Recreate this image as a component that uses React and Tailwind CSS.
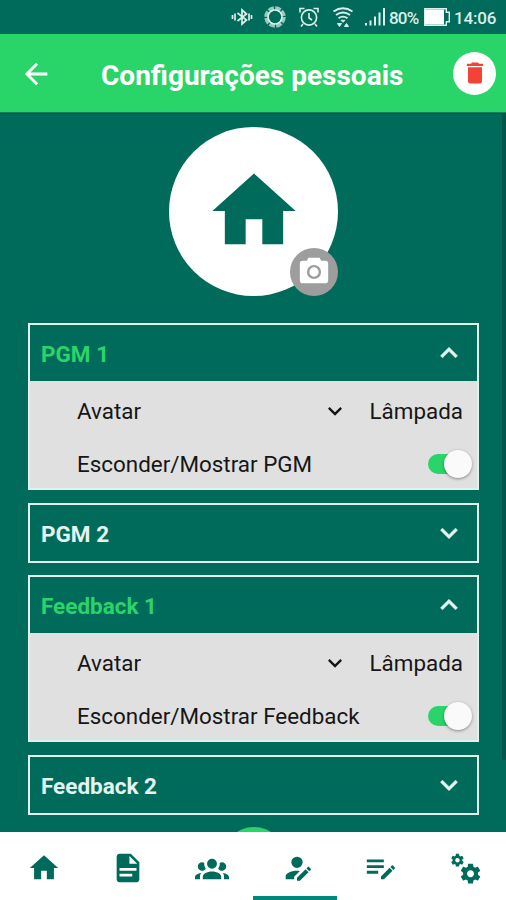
import React, { useState } from 'react';

const icons = {
    home: 'M10 20v-6h4v6h5v-8h3L12 3 2 12h3v8z',
    document: 'M13 9h5.5L13 3.5V9M6 2h8l6 6v12a2 2 0 0 1-2 2H6a2 2 0 0 1-2-2V4c0-1.11.89-2 2-2m9 16v-2H6v2h9m3-4v-2H6v2h12Z',
    group: 'M12,5.5A3.5,3.5 0 0,1 15.5,9A3.5,3.5 0 0,1 12,12.5A3.5,3.5 0 0,1 8.5,9A3.5,3.5 0 0,1 12,5.5M5,8C5.56,8 6.08,8.15 6.53,8.42C6.38,9.85 6.8,11.27 7.66,12.38C7.16,13.34 6.16,14 5,14A3,3 0 0,1 2,11A3,3 0 0,1 5,8M19,8A3,3 0 0,1 22,11A3,3 0 0,1 19,14C17.84,14 16.84,13.34 16.34,12.38C17.2,11.27 17.62,9.85 17.47,8.42C17.92,8.15 18.44,8 19,8M5.5,18.25C5.5,16.18 8.41,14.5 12,14.5C15.59,14.5 18.5,16.18 18.5,18.25V20H5.5V18.25M0,20V18.5C0,17.11 1.89,15.94 4.45,15.6C3.86,16.28 3.5,17.22 3.5,18.25V20H0M24,20H20.5V18.25C20.5,17.22 20.14,16.28 19.55,15.6C22.11,15.94 24,17.11 24,18.5V20Z',
    userEdit: 'M21.7,13.35L20.7,14.35L18.65,12.3L19.65,11.3C19.86,11.09 20.21,11.09 20.42,11.3L21.7,12.58C21.91,12.79 21.91,13.14 21.7,13.35M12,18.94L18.06,12.88L20.11,14.93L14.06,21H12V18.94M12,14C7.58,14 4,15.79 4,18V20H10V18.11L14,14.11C13.34,14.03 12.67,14 12,14M12,4A4,4 0 0,0 8,8A4,4 0 0,0 12,12A4,4 0 0,0 16,8A4,4 0 0,0 12,4Z',
    listEdit: 'M2,6V8H14V6H2M2,10V12H14V10H2M20.04,10.13C19.9,10.13 19.76,10.19 19.65,10.3L18.65,11.3L20.7,13.35L21.7,12.35C21.92,12.14 21.92,11.79 21.7,11.58L20.42,10.3C20.31,10.19 20.18,10.13 20.04,10.13M18.07,11.88L12,17.94V20H14.06L20.12,13.93L18.07,11.88M2,14V16H10V14H2Z',
    cogs: 'M15.9,18.45C17.25,18.45 18.35,17.35 18.35,16C18.35,14.65 17.25,13.55 15.9,13.55C14.54,13.55 13.45,14.65 13.45,16C13.45,17.35 14.54,18.45 15.9,18.45M21.1,16.68L22.58,17.84C22.71,17.95 22.75,18.13 22.66,18.29L21.26,20.71C21.17,20.86 21,20.92 20.83,20.86L19.09,20.16C18.73,20.44 18.33,20.67 17.91,20.85L17.64,22.7C17.62,22.87 17.47,23 17.3,23H14.5C14.32,23 14.18,22.87 14.15,22.7L13.89,20.85C13.46,20.67 13.07,20.44 12.71,20.16L10.96,20.86C10.81,20.92 10.62,20.86 10.54,20.71L9.14,18.29C9.05,18.13 9.09,17.95 9.22,17.84L10.7,16.68L10.65,16L10.7,15.31L9.22,14.16C9.09,14.05 9.05,13.86 9.14,13.71L10.54,11.29C10.62,11.13 10.81,11.07 10.96,11.13L12.71,11.84C13.07,11.56 13.46,11.32 13.89,11.15L14.15,9.29C14.18,9.13 14.32,9 14.5,9H17.3C17.47,9 17.62,9.13 17.64,9.29L17.91,11.15C18.33,11.32 18.73,11.56 19.09,11.84L20.83,11.13C21,11.07 21.17,11.13 21.26,11.29L22.66,13.71C22.75,13.86 22.71,14.05 22.58,14.16L21.1,15.31L21.15,16L21.1,16.68M6.69,8.07C7.56,8.07 8.26,7.37 8.26,6.5C8.26,5.63 7.56,4.92 6.69,4.92A1.58,1.58 0 0,0 5.11,6.5C5.11,7.37 5.82,8.07 6.69,8.07M10.03,6.94L11,7.68C11.07,7.75 11.09,7.87 11.03,7.97L10.13,9.53C10.08,9.63 9.96,9.67 9.86,9.63L8.74,9.18L8,9.62L7.81,10.81C7.79,10.92 7.7,11 7.59,11H5.79C5.67,11 5.58,10.92 5.56,10.81L5.4,9.62L4.64,9.18L3.5,9.63C3.41,9.67 3.3,9.63 3.24,9.53L2.34,7.97C2.28,7.87 2.31,7.75 2.39,7.68L3.34,6.94L3.31,6.5L3.34,6.06L2.39,5.32C2.31,5.25 2.28,5.13 2.34,5.03L3.24,3.47C3.3,3.37 3.41,3.33 3.5,3.38L4.63,3.82L5.4,3.38L5.56,2.19C5.58,2.08 5.67,2 5.79,2H7.59C7.7,2 7.79,2.08 7.81,2.19L8,3.38L8.74,3.82L9.86,3.38C9.96,3.33 10.08,3.37 10.13,3.47L11.03,5.03C11.09,5.13 11.07,5.25 11,5.32L10.03,6.06L10.06,6.5L10.03,6.94Z',
    camera: 'M4 4h3l1-2h8l1 2h3a2 2 0 0 1 2 2v12a2 2 0 0 1-2 2H4a2 2 0 0 1-2-2V6a2 2 0 0 1 2-2m8 3a5 5 0 1 0 0 10 5 5 0 0 0 0-10m0 1.7a3.3 3.3 0 1 1 0 6.6 3.3 3.3 0 0 1 0-6.6z',
    trash: 'M19 4h-3.5l-1-1h-5l-1 1H5v2h14M6 19a2 2 0 0 0 2 2h8a2 2 0 0 0 2-2V7H6v12Z',
    back: 'M20 11v2H8l5.5 5.5-1.42 1.42L4.16 12l7.92-7.92L13.5 5.5 8 11h12Z',
    up: 'M7.41 15.41 12 10.83l4.59 4.58L18 14l-6-6-6 6z',
    down: 'M7.41 8.58 12 13.17l4.59-4.59L18 10l-6 6-6-6z',
};

const Icon = ({ name, className }) => (
    <svg viewBox="0 0 24 24" fill="currentColor" className={`shrink-0 ${className}`}>
        <path d={icons[name]} />
    </svg>
);

const StatusBar = () => (
    <div className="h-[34px] shrink-0 flex items-center justify-end pr-[10px] text-[#dcefeb]">
        <svg viewBox="0 0 22 20" className="w-[22px] h-5" fill="none" stroke="currentColor" strokeWidth="1.7">
            <path d="M6.5 6 15.5 13l-4.500 4V3l4.500 4-9 7" />
            <path d="M4 6.500v7M1.500 8v4M18 6.500v7M20.500 8v4" />
        </svg>
        <svg viewBox="0 0 24 24" className="w-6 h-6 ml-[10px]" fill="none" stroke="currentColor">
            <circle cx="12" cy="12" r="8.5" strokeWidth="4.500" strokeDasharray="5.4 1.27" opacity=".7" />
            <circle cx="12" cy="12" r="7" strokeWidth="1.6" />
        </svg>
        <svg viewBox="0 0 22 22" className="w-[22px] h-[22px] ml-[11px]" fill="none" stroke="currentColor" strokeWidth="1.6">
            <circle cx="11" cy="11.5" r="7.6" />
            <path d="M11 7v5l3 2M5 18l-2 2.5M17 18l2 2.5M2 6.5V2.5h4.5M20 6.5V2.5h-4.5" />
        </svg>
        <svg viewBox="0 0 22 24" className="w-[22px] h-6 ml-[12px]" fill="none" stroke="currentColor" strokeWidth="1.9">
            <path d="M1.5 6.500q9.500-6.500 19 0M4 10q7-5 14 0M6.500 13.300q4.500-3.300 9 0" />
            <path d="M9 15.300h4l-2 2zM5.500 18.500h4l-2 3zM12.500 21.500h4l-2-3z" fill="currentColor" strokeWidth="1" />
        </svg>
        <svg viewBox="0 0 20 18" className="w-5 h-[18px] ml-[11px]" fill="currentColor">
            <path d="M0 15h2v2.500H0zM4.500 12.500h2v5h-2zM9 8.500h2v9H9zM13.500 4.500h2v13h-2zM18 0h2v17.500h-2z" />
        </svg>
        <span className="ml-1 mt-[2px] w-[33px] text-[17px] leading-5 tracking-[-0.8px] whitespace-nowrap font-medium">80%</span>
        <svg viewBox="0 0 26 18" className="w-[26px] h-[18px] ml-[2px]">
            <path d="M.8.800h21.500v3.500h3v9.500h-3v3.400H.800z" fill="none" stroke="currentColor" strokeWidth="1.400" />
            <path d="M.5 1.500h19.500v15H.500z" fill="#fff" />
        </svg>
        <span className="ml-[4px] mt-[2px] w-[42px] text-[17px] leading-5 tracking-[-0.2px] whitespace-nowrap font-medium">14:06</span>
    </div>
);

const Header = () => (
    <header className="h-[79px] shrink-0 flex items-center bg-[#29d568] border-b border-[#12805a] text-white">
        <button className="ml-[19px] mt-[2px]"><Icon name="back" className="w-[34px] h-[34px]" /></button>
        <h1 className="ml-[48px] mt-[5px] w-[320px] text-[28px] leading-8 font-bold whitespace-nowrap">Configurações pessoais</h1>
        <button className="ml-[32px] w-[43px] h-[43px] rounded-full bg-white text-[#f44336] flex items-center justify-center">
            <Icon name="trash" className="w-[28px] h-[28px]" />
        </button>
    </header>
);

const Avatar = () => (
    <div className="relative mx-auto mt-[13px] w-[169px] h-[169px] shrink-0 rounded-full bg-white text-[#016b5b] flex items-center justify-center">
        <Icon name="home" className="w-[100px] h-[100px] -mt-[2px]" />
        <button className="absolute right-0 bottom-0 w-[48px] h-[48px] rounded-full bg-[#9d9d9d] text-white flex items-center justify-center">
            <Icon name="camera" className="w-[34px] h-[34px]" />
        </button>
    </div>
);

const Toggle = ({ on, onClick }) => (
    <button onClick={onClick} className="relative w-[44px] h-[28px] flex items-center">
        <span className={`block w-[38px] h-[20px] rounded-full ${on ? 'bg-[#29d568]' : 'bg-[#9e9e9e]'}`} />
        <span className={`absolute top-0 w-[28px] h-[28px] rounded-full bg-[#fafafa] shadow-[0_1px_3px_rgba(0,0,0,0.4)] ${on ? 'right-0' : 'left-0'}`} />
    </button>
);

const Panel = ({ title, label, startOpen }) => {
    const [open, setOpen] = useState(startOpen);
    const [visible, setVisible] = useState(true);

    return (
        <section className="border-2 border-[#e3f0ec] shrink-0">
            <button
                onClick={() => setOpen(!open)}
                className={`w-full h-[56px] flex items-center justify-between px-[11px] ${open ? 'text-[#29d568]' : 'text-[#e4f4f1]'}`}
            >
                <span className="mt-[2px] text-[22.5px] leading-7 font-bold">{title}</span>
                <Icon name={open ? 'up' : 'down'} className="w-[34px] h-[34px] text-[#e4f4f1] stroke-current stroke-[0.4]" />
            </button>
            {open && (
                <div className="bg-[#e0e0e0] text-[#161616] text-[22.4px] leading-7 h-[107px] pl-[47px] flex flex-col">
                    <div className="flex items-center h-[60px] pr-[14px]">
                        <span className="flex-1">Avatar</span>
                        <Icon name="down" className="w-[28px] h-[28px] mr-[21px]" />
                        <span>Lâmpada</span>
                    </div>
                    <div className="flex items-center justify-between h-[45px] pr-[5px]">
                        <span>{label}</span>
                        <Toggle on={visible} onClick={() => setVisible(!visible)} />
                    </div>
                </div>
            )}
        </section>
    );
};

const tabs = ['home', 'document', 'group', 'userEdit', 'listEdit', 'cogs'];

const BottomNav = () => {
    const [active, setActive] = useState('userEdit');

    return (
        <nav className="h-[68px] shrink-0 grid grid-cols-6 bg-white text-[#016b5b]">
            {tabs.map((tab) => (
                <button
                    key={tab}
                    onClick={() => setActive(tab)}
                    className={`flex items-center justify-center pt-[7px] pl-[3px] border-b-4 ${active === tab ? 'border-[#00897b]' : 'border-transparent'}`}
                >
                    <Icon name={tab} className="w-[34px] h-[34px]" />
                </button>
            ))}
        </nav>
    );
};

const App = () => (
    <div className="w-[506px] h-[900px] flex flex-col overflow-hidden bg-[#016b5b] font-['Roboto',sans-serif]">
        <StatusBar />
        <Header />
        <div className="flex-1 min-h-0 flex overflow-hidden border-t border-[#00564a]">
            <main className="flex-1 flex flex-col pl-[28px] pr-[23px]">
                <Avatar />
                <div className="mt-[27px] flex flex-col gap-[12.6px]">
                    <Panel title="PGM 1" label="Esconder/Mostrar PGM" startOpen />
                    <Panel title="PGM 2" label="Esconder/Mostrar PGM" startOpen={false} />
                    <Panel title="Feedback 1" label="Esconder/Mostrar Feedback" startOpen />
                    <Panel title="Feedback 2" label="Esconder/Mostrar Feedback" startOpen={false} />
                </div>
                <button className="mx-auto mt-[12px] w-[62px] h-[62px] shrink-0 rounded-full bg-[#29d568]" />
            </main>
            <div className="w-[4px] h-[646px] bg-[#00564a]" />
        </div>
        <BottomNav />
    </div>
);

export default App;
